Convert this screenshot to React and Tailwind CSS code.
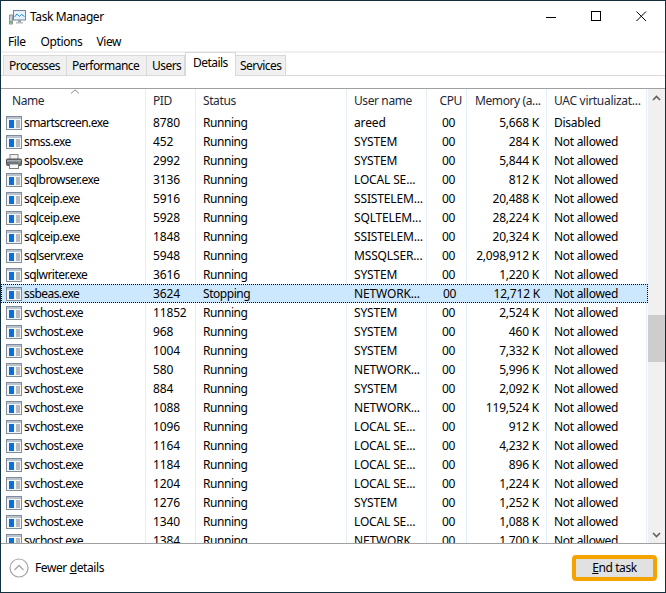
const R = 'Running', NA = 'Not allowed', S = 'SYSTEM', L = 'LOCAL SE...', N = 'NETWORK...';
const rows = [
  ['smartscreen.exe', '8780', R, 'areed', '5,668 K', 'Disabled'],
  ['smss.exe', '452', R, S, '284 K', NA],
  ['spoolsv.exe', '2992', R, S, '5,844 K', NA],
  ['sqlbrowser.exe', '3136', R, L, '812 K', NA],
  ['sqlceip.exe', '5916', R, 'SSISTELEM...', '20,488 K', NA],
  ['sqlceip.exe', '5928', R, 'SQLTELEM...', '28,224 K', NA],
  ['sqlceip.exe', '1848', R, 'SSISTELEM...', '20,324 K', NA],
  ['sqlservr.exe', '5948', R, 'MSSQLSER...', '2,098,912 K', NA],
  ['sqlwriter.exe', '3616', R, S, '1,220 K', NA],
  ['ssbeas.exe', '3624', 'Stopping', N, '12,712 K', NA],
  ['svchost.exe', '11852', R, S, '2,524 K', NA],
  ['svchost.exe', '968', R, S, '460 K', NA],
  ['svchost.exe', '1004', R, S, '7,332 K', NA],
  ['svchost.exe', '580', R, N, '5,996 K', NA],
  ['svchost.exe', '884', R, S, '2,092 K', NA],
  ['svchost.exe', '1088', R, N, '119,524 K', NA],
  ['svchost.exe', '1096', R, L, '912 K', NA],
  ['svchost.exe', '1164', R, L, '4,232 K', NA],
  ['svchost.exe', '1184', R, L, '896 K', NA],
  ['svchost.exe', '1204', R, L, '1,224 K', NA],
  ['svchost.exe', '1276', R, S, '1,252 K', NA],
  ['svchost.exe', '1340', R, L, '1,088 K', NA],
  ['svchost.exe', '1384', R, N, '1,700 K', NA],
];

const grid = 'grid grid-cols-[145px_50px_151px_80px_40px_80px_100px]';
const sep = 'border-r border-[#e4eefa]';

function AppIcon() {
  return (
    <svg width="16" height="14" viewBox="0 0 16 14" className="shrink-0">
      <rect x="0.5" y="0.5" width="15" height="13" fill="#f4f4f4" stroke="#7f8c99" />
      <rect x="1" y="1" width="14" height="2" fill="#b9c4d0" />
      <rect x="3" y="4" width="5" height="8" fill="#0a6fd8" />
      <path d="M10 5h4M10 7h4M10 9h4M10 11h4" stroke="#77818c" strokeWidth="1" />
    </svg>
  );
}

function PrinterIcon() {
  return (
    <svg width="16" height="15" viewBox="0 0 16 15" className="shrink-0">
      <rect x="4" y="0.5" width="8" height="5" fill="#f2f2f2" stroke="#8a8a8a" />
      <rect x="0.5" y="5" width="15" height="6.5" rx="1" fill="#6f7478" stroke="#4c5053" />
      <rect x="1" y="6" width="14" height="1.5" fill="#a8adb1" />
      <rect x="3.5" y="10" width="9" height="4.5" fill="#fafafa" stroke="#7d7d7d" />
      <rect x="12.5" y="7.5" width="1.5" height="1" fill="#7fd06a" />
    </svg>
  );
}

function Row({ r }) {
  const selected = r[0] === 'ssbeas.exe';
  const line = selected ? '' : sep;
  return (
    <div className={`${grid} h-[19px] shrink-0 items-stretch leading-[20px] ${selected ? 'bg-[#cce8ff] outline-1 outline-dotted -outline-offset-1 outline-black' : ''}`}>
      <div className={`${line} flex items-center pl-[5px] gap-[2px] overflow-hidden whitespace-nowrap tracking-[-0.55px]`}>
        {r[0] === 'spoolsv.exe' ? <PrinterIcon /> : <AppIcon />}
        <span>{r[0]}</span>
      </div>
      <div className={`${line} pl-[7px] tracking-[-0.15px]`}>{r[1]}</div>
      <div className={`${line} pl-[7px] tracking-[-0.45px]`}>{r[2]}</div>
      <div className={`${line} pl-[7px] whitespace-nowrap overflow-hidden tracking-[-0.15px]`}>{r[3]}</div>
      <div className={`${line} text-right pr-[11px]`}>00</div>
      <div className={`${line} text-right pr-[7px] whitespace-nowrap tracking-[-0.2px]`}>{r[4]}</div>
      <div className={`${line} pl-[7px] whitespace-nowrap tracking-[-0.3px]`}>{r[5]}</div>
    </div>
  );
}

export default function App() {
  return (
    <div
      className="w-[666px] h-[593px] bg-white text-black border border-[#14303f] flex flex-col overflow-hidden text-[12px] tracking-[-0.4px]"
      style={{ fontFamily: '"Noto Sans", "Open Sans", sans-serif' }}
    >
      {/* Title bar */}
      <div className="h-[30px] shrink-0 flex items-center pl-[8px] pt-[1px]">
        <svg width="17" height="16" viewBox="0 0 17 16" className="shrink-0">
          <rect x="0.5" y="6" width="3" height="9" fill="#c9ced1" stroke="#7d8589" strokeWidth="0.8" />
          <rect x="1" y="12" width="2" height="2" fill="#6cbf4a" />
          <rect x="4.5" y="1.5" width="12" height="9.5" fill="#e3f2fb" stroke="#6f8798" />
          <path d="M5.5 8l2.5-3 2.5 2.5 2-2 3 2" fill="none" stroke="#2a8fd6" strokeWidth="1" />
          <rect x="9" y="11" width="3" height="2" fill="#9aa3a8" />
          <rect x="7" y="13" width="7" height="1.5" fill="#b7bdc1" />
        </svg>
        <span className="ml-[4px]">Task Manager</span>
        <div className="ml-auto flex items-center h-full">
          <svg width="46" height="29" viewBox="0 0 46 29"><path d="M0 15.5h10" transform="translate(5 0)" stroke="#000" /></svg>
          <svg width="46" height="29" viewBox="0 0 46 29"><rect x="4.5" y="9.5" width="9" height="9" fill="none" stroke="#000" /></svg>
          <svg width="28" height="29" viewBox="0 0 28 29"><path d="M3.5 9.5l9.5 9.5M13 9.5L3.5 19" stroke="#000" fill="none" /></svg>
          <div className="w-[4px]" />
        </div>
      </div>
      {/* Menu */}
      <div className="h-[20px] shrink-0 flex items-center pl-[7px] pt-[1px]">
        <span>File</span><span className="ml-[15px]">Options</span><span className="ml-[14px]">View</span>
      </div>
      <div className="h-[2px] shrink-0 bg-[#f0f0f0]" />
      {/* Tabs */}
      <div className="h-[23px] shrink-0 flex items-end pl-[2px] pt-[2px] border-b border-[#d9d9d9] tracking-[-0.55px]">
        <div className="h-[21px] w-[63px] -mb-[1px] bg-[#f0f0f0] border border-r-0 border-[#d9d9d9] pl-[5px] leading-[20px]">Processes</div>
        <div className="h-[21px] w-[80px] -mb-[1px] bg-[#f0f0f0] border border-r-0 border-[#d9d9d9] pl-[5px] leading-[20px]">Performance</div>
        <div className="h-[21px] w-[39px] -mb-[1px] bg-[#f0f0f0] border border-[#d9d9d9] pl-[5px] leading-[20px]">Users</div>
        <div className="relative z-10 h-[24px] w-[51px] -mt-[2px] -mb-[1px] bg-white border border-b-0 border-[#d9d9d9] pl-[7px] leading-[20px]">Details</div>
        <div className="h-[21px] w-[50px] -mb-[1px] bg-[#f0f0f0] border border-l-0 border-[#d9d9d9] pl-[4px] leading-[20px]">Services</div>
      </div>
      <div className="h-[12px] shrink-0" />
      {/* List */}
      <div className="h-[456px] shrink-0 flex border-t border-b border-[#a0a0a0] relative">
        <svg width="10" height="5" viewBox="0 0 10 5" className="absolute left-[69px] top-0">
          <path d="M1 4.5L5 0.8l4 3.7" fill="none" stroke="#8a8a8a" />
        </svg>
        <div className="w-[647px] shrink-0 flex flex-col overflow-hidden">
          <div className={`${grid} h-[24px] shrink-0 leading-[24px] text-[#1c2a3a]`}>
            <div className={`${sep} pl-[11px]`}>Name</div>
            <div className={`${sep} pl-[7px]`}>PID</div>
            <div className={`${sep} pl-[7px]`}>Status</div>
            <div className={`${sep} pl-[7px]`}>User name</div>
            <div className={`${sep} text-right pr-[4px]`}>CPU</div>
            <div className={`${sep} pl-[8px] whitespace-nowrap overflow-hidden`}>Memory (a...</div>
            <div className={`${sep} pl-[7px] whitespace-nowrap overflow-hidden tracking-[-0.3px]`}>UAC virtualizat...</div>
          </div>
          {rows.map((r, i) => <Row key={i} r={r} />)}
        </div>
        {/* Scrollbar */}
        <div className="w-[17px] shrink-0 ml-auto bg-[#f0f0f0] flex flex-col items-center">
          <div className="h-[17px] shrink-0 flex items-center justify-center">
            <svg width="9" height="6" viewBox="0 0 9 6"><path d="M1 5l3.5-3.5L8 5" fill="none" stroke="#606060" strokeWidth="1.6" /></svg>
          </div>
          <div className="h-[209px] shrink-0" />
          <div className="h-[47px] w-full shrink-0 bg-[#cdcdcd]" />
          <div className="flex-1" />
          <div className="h-[17px] shrink-0 flex items-center justify-center">
            <svg width="9" height="6" viewBox="0 0 9 6"><path d="M1 1l3.5 3.5L8 1" fill="none" stroke="#606060" strokeWidth="1.6" /></svg>
          </div>
        </div>
      </div>
      {/* Footer */}
      <div className="flex-1 flex items-center pl-[8px] pr-[8px]">
        <svg width="20" height="20" viewBox="0 0 20 20" className="shrink-0">
          <circle cx="10" cy="10" r="9" fill="#fff" stroke="#a6a6a6" strokeWidth="1.2" />
          <path d="M5.5 12l4.5-4.5 4.5 4.5" fill="none" stroke="#a6a6a6" strokeWidth="1.3" />
        </svg>
        <span className="ml-[6px]">Fewer <span className="underline">d</span>etails</span>
        <button className="ml-auto h-[26px] w-[85px] rounded-[4px] border-[4px] border-[#f5a300] bg-[#e1e1e1] tracking-[-0.4px]">
          <span className="underline">E</span>nd task
        </button>
      </div>
    </div>
  );
}
